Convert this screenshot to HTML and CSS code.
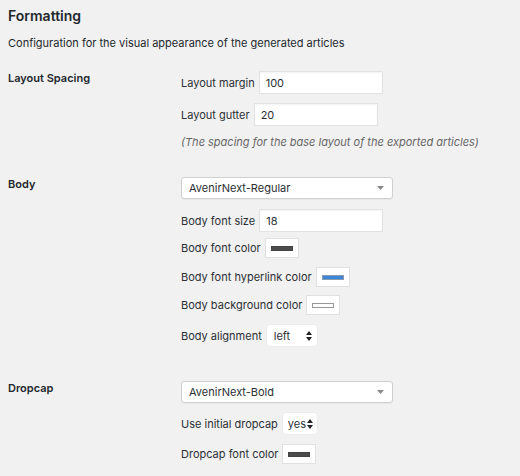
FILE: index.html
```html
<!DOCTYPE html>
<html>
<head>
<meta charset="utf-8">
<link rel="stylesheet" href="styles.css">
</head>
<body>
<div class="page">
  <h2 class="title">Formatting</h2>
  <p class="desc">Configuration for the visual appearance of the generated articles</p>

  <div class="section s-layout">
    <div class="th">Layout Spacing</div>
    <div class="td">
      <div class="row r-input"><span class="lbl">Layout margin</span><span class="input w124">100</span></div>
      <div class="row r-input g9"><span class="lbl">Layout gutter</span><span class="input w124">20</span></div>
      <p class="note">(The spacing for the base layout of the exported articles)</p>
    </div>
  </div>

  <div class="section s-body">
    <div class="th">Body</div>
    <div class="td">
      <div class="row"><span class="select big">AvenirNext-Regular<svg class="caret" width="7" height="4" viewBox="0 0 7 4"><path d="M0 0h7L3.5 4z" fill="#888"/></svg></span></div>
      <div class="row r-input g10"><span class="lbl">Body font size</span><span class="input w124">18</span></div>
      <div class="row r-swatch g6"><span class="lbl">Body font color</span><span class="swatch"><span class="bar dark"></span></span></div>
      <div class="row r-swatch g9"><span class="lbl">Body font hyperlink color</span><span class="swatch"><span class="bar blue"></span></span></div>
      <div class="row r-swatch g8"><span class="lbl">Body background color</span><span class="swatch"><span class="bar white"></span></span></div>
      <div class="row r-input g9"><span class="lbl">Body alignment</span><span class="select small w52">left<svg class="updown" width="6" height="10" viewBox="0 0 6 10"><path d="M0 4L3 0L6 4z M0 6L3 10L6 6z" fill="#222"/></svg></span></div>
    </div>
  </div>

  <div class="section s-drop">
    <div class="th">Dropcap</div>
    <div class="td">
      <div class="row"><span class="select big">AvenirNext-Bold<svg class="caret" width="7" height="4" viewBox="0 0 7 4"><path d="M0 0h7L3.5 4z" fill="#888"/></svg></span></div>
      <div class="row r-input g9"><span class="lbl">Use initial dropcap</span><span class="select small w36">yes<svg class="updown" width="6" height="10" viewBox="0 0 6 10"><path d="M0 4L3 0L6 4z M0 6L3 10L6 6z" fill="#222"/></svg></span></div>
      <div class="row r-swatch g9"><span class="lbl">Dropcap font color</span><span class="swatch"><span class="bar dark"></span></span></div>
    </div>
  </div>
</div>
</body>
</html>
```

FILE: styles.css
```css
html, body {
  margin: 0;
  padding: 0;
  background: #f1f1f1;
}

body {
  font-family: Inter, "Noto Sans", "Liberation Sans", sans-serif;
  font-size: 11px;
  color: #23282d;
}

.page {
  padding: 0 8px;
}

.title {
  margin: 7px 0 0;
  font-size: 14px;
  line-height: 18px;
  font-weight: 600;
}

.desc {
  margin: 10px 0 0;
  line-height: 16px;
}

.section {
  display: grid;
  grid-template-columns: 173px 1fr;
}

.s-layout { margin-top: 19px; }
.s-body { margin-top: 26px; }
.s-drop { margin-top: 33px; }

.th {
  font-weight: 600;
  line-height: 16px;
}

.td {
  padding-top: 1px;
}

.row {
  display: flex;
  align-items: center;
  gap: 4px;
}

.r-input { height: 23px; }
.r-swatch { height: 20px; }

.g6 { margin-top: 6px; }
.g8 { margin-top: 8px; }
.g9 { margin-top: 9px; }
.g10 { margin-top: 10px; }

.lbl {
  line-height: 16px;
  color: #2c3035;
}

.input {
  box-sizing: border-box;
  height: 23px;
  display: flex;
  align-items: center;
  padding: 0 6px;
  background: #fff;
  border: 1px solid #e2e2e2;
  box-shadow: inset 0 1px 2px rgba(0, 0, 0, 0.05);
  color: #2c3035;
}

.w124 { width: 124px; }

.note {
  margin: 8px 0 0;
  line-height: 16px;
  font-style: italic;
  color: #666;
}

.select {
  box-sizing: border-box;
  display: flex;
  align-items: center;
  justify-content: space-between;
  background: #fff;
  color: #2c3035;
}

.select.big {
  width: 212px;
  height: 22px;
  padding: 0 8px 0 7px;
  border: 1px solid #cfcfcf;
  border-radius: 3px;
  box-shadow: 0 1px 1px rgba(0, 0, 0, 0.04);
}

.select.small {
  height: 23px;
  padding: 0 5px 0 7px;
  border: 1px solid #ececec;
  border-radius: 4px;
}

.w52 { width: 52px; }
.select.small.w36 { width: 36px; padding-left: 5px; padding-right: 4px; }

.swatch {
  box-sizing: border-box;
  width: 34px;
  height: 20px;
  display: flex;
  align-items: center;
  justify-content: center;
  background: #fff;
  border: 1px solid #e0e0e0;
}

.bar {
  box-sizing: border-box;
  width: 22px;
  height: 5px;
}

.bar.dark {
  background: #4b4b4b;
  border: 1px solid #444;
}

.bar.blue {
  background: #3b87d6;
  border: 1px solid #8a9bb0;
}

.bar.white {
  background: #fff;
  border: 1px solid #999;
}
```
